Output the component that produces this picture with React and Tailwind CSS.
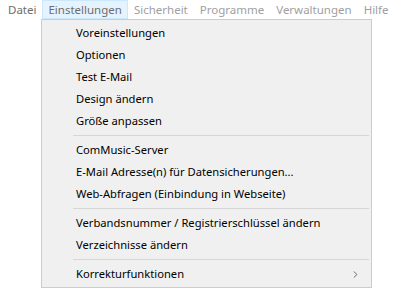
import { ChevronRight } from "lucide-react";

const bar = [
  { label: "Datei", tone: "text-[#6d6d6d]" },
  { label: "Einstellungen", tone: "text-[#6d6d6d]", open: true },
  { label: "Sicherheit", tone: "text-[#a0a0a0]" },
  { label: "Programme", tone: "text-[#a0a0a0]" },
  { label: "Verwaltungen", tone: "text-[#a0a0a0]" },
  { label: "Hilfe", tone: "text-[#a0a0a0]" },
];

const groups = [
  ["Voreinstellungen", "Optionen", "Test E-Mail", "Design ändern", "Größe anpassen"],
  ["ComMusic-Server", "E-Mail Adresse(n) für Datensicherungen...", "Web-Abfragen (Einbindung in Webseite)"],
  ["Verbandsnummer / Registrierschlüssel ändern", "Verzeichnisse ändern"],
];

function Item({ children, sub }) {
  return (
    <div className="flex h-[22px] items-center pl-[34px] pr-[10px] text-[#000]">
      <span className="flex-1">{children}</span>
      {sub && <ChevronRight size={11} strokeWidth={1.6} className="text-[#333]" />}
    </div>
  );
}

function Sep() {
  return (
    <div className="flex h-[7px] items-center pl-[31px] pr-[2px]">
      <div className="h-px w-full bg-[#d7d7d7]" />
    </div>
  );
}

export default function App() {
  return (
    <div
      className="relative h-[298px] w-[404px] bg-white text-[11.2px]"
      style={{ fontFamily: '"Noto Sans", "Open Sans", sans-serif' }}
    >
      {/* menu bar */}
      <div className="flex h-[19px] items-stretch pl-[2px] text-[11.5px]">
        {bar.map((m) => (
          <div
            key={m.label}
            className={
              m.open
                ? `flex items-center border border-[#cce8ff] bg-[#e5f3ff] px-[5px] ${m.tone}`
                : `flex items-center border border-transparent px-[5px] ${m.tone}`
            }
          >
            {m.label}
          </div>
        ))}
      </div>

      {/* dropdown */}
      <div className="absolute left-[41px] top-[19px] w-[331px] border border-[#cccccc] bg-[#f0f0f0] py-[2px]">
        {groups.map((g) => (
          <div key={g[0]}>
            {g.map((t) => (
              <Item key={t}>{t}</Item>
            ))}
            <Sep />
          </div>
        ))}
        <Item sub>Korrekturfunktionen</Item>
      </div>
    </div>
  );
}
